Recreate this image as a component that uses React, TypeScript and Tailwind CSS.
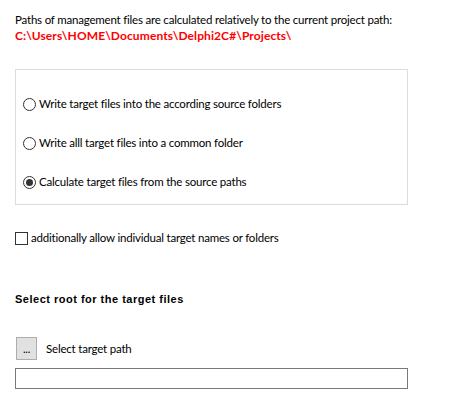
export default function App() {
  const options = [
    { label: "Write target files into the according source folders", checked: false },
    { label: "Write alll target files into a common folder", checked: false },
    { label: "Calculate target files from the source paths", checked: true },
  ];

  return (
    <div className="w-[449px] h-[412px] bg-white pl-[15px] text-[11.5px] tracking-[-0.2px] leading-[16px] text-black whitespace-nowrap font-['Lato','Noto_Sans',sans-serif]">
      {/* Header */}
      <div className="pt-[12px]">
        <p>Paths of management files are calculated relatively to the current project path:</p>
        <p className="font-bold text-[12px] tracking-[0.1px] text-[#ff0000]">C:\Users\HOME\Documents\Delphi2C#\Projects\</p>
      </div>

      {/* Options group */}
      <div className="mt-[25px] w-[393px] h-[136px] border border-[#dcdcdc] pl-[7px] pt-[26px] flex flex-col gap-[23px]">
        {options.map((o) => (
          <div key={o.label} className="flex items-center h-[16px]">
            <span className="w-[13px] h-[13px] rounded-full border border-[#333333] bg-white flex items-center justify-center">
              {o.checked && <span className="w-[7px] h-[7px] rounded-full bg-[#333333]" />}
            </span>
            <span className="ml-[3px]">{o.label}</span>
          </div>
        ))}
      </div>

      {/* Checkbox */}
      <div className="mt-[25px] flex items-center h-[16px]">
        <span className="w-[13px] h-[13px] border border-[#333333] bg-white" />
        <span className="ml-[3px]">additionally allow individual target names or folders</span>
      </div>

      {/* Target root */}
      <p className="mt-[45px] font-bold text-[11px] tracking-[0.5px] font-['Liberation_Sans',sans-serif]">Select root for the target files</p>

      <div className="mt-[30px] flex items-center">
        <button className="ml-[1px] w-[21px] h-[23px] bg-[#e1e1e1] border border-[#adadad] text-[11px] leading-none flex items-center justify-center">
          ...
        </button>
        <span className="ml-[9px]">Select target path</span>
      </div>

      <input className="mt-[8px] block w-[393px] h-[21px] border border-[#7a7a7a] outline-none px-1" />
    </div>
  );
}
